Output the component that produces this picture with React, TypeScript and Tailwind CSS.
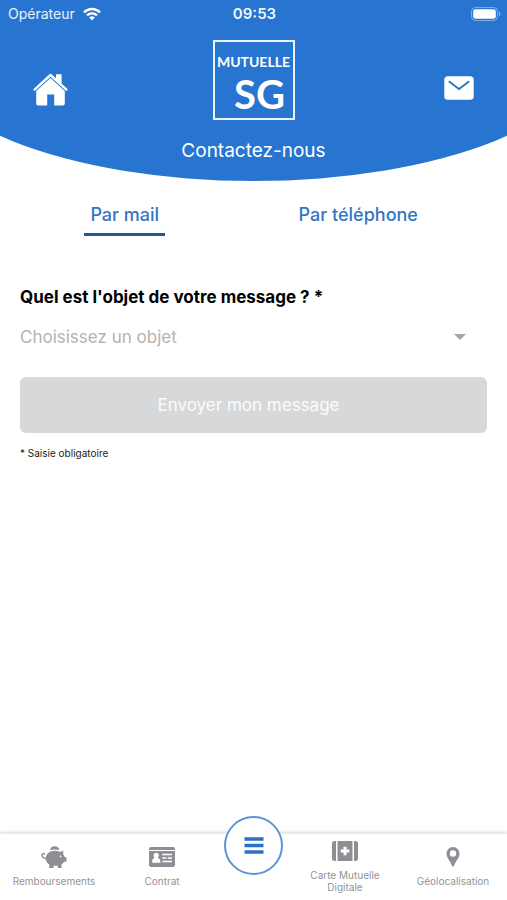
import type { ReactNode } from "react";

function WifiIcon() {
  return (
    <svg viewBox="0 0 18 14" className="h-3.5 w-[18px]" fill="none" stroke="white" strokeWidth="2.4" aria-hidden="true">
      <path d="M1 5.3a11.3 11.3 0 0 1 16 0" />
      <path d="M4 8.5a7 7 0 0 1 10 0" />
      <path d="M9 13.4 6.2 10.6a4 4 0 0 1 5.6 0Z" fill="white" stroke="none" />
    </svg>
  );
}

function BatteryIcon() {
  return (
    <svg viewBox="0 0 30 14" className="h-3.5 w-[30px]" aria-hidden="true">
      <rect x="0.5" y="0.5" width="26" height="13" rx="4" fill="none" stroke="white" strokeOpacity="0.4" />
      <rect x="2.2" y="2.2" width="22.6" height="9.6" rx="2.4" fill="white" />
      <path d="M28 4.8c1.8.6 1.8 3.8 0 4.4Z" fill="white" fillOpacity="0.5" />
    </svg>
  );
}

function HomeIcon() {
  return (
    <svg viewBox="0 0 35 33" className="h-[33px] w-[35px]" aria-hidden="true">
      <path d="M23 1.2h5.600v10.400l-5.600-5Z" fill="white" />
      <path d="M1.6 16.6 17.5 2l15.9 14.6" fill="none" stroke="white" strokeWidth="2.4" strokeLinecap="round" strokeLinejoin="round" />
      <path d="M17.5 5 31.800 18v12.6a2 2 0 0 1-2 2h-8.600V21.500h-7v11.1H5.2a2 2 0 0 1-2-2V18Z" fill="white" />
    </svg>
  );
}

function MailIcon() {
  return (
    <svg viewBox="0 0 30 24" className="h-6 w-[30px]" aria-hidden="true">
      <rect x="0.3" y="0.3" width="29.4" height="23.4" rx="3.5" fill="white" />
      <path d="m4.800 5.2 10.200 7.800 10.200-7.800" fill="none" stroke="#2775d1" strokeWidth="1.9" />
    </svg>
  );
}

function PigIcon() {
  return (
    <svg viewBox="0 0 26 24" className="h-6 w-[26px]" fill="#8e8f95" aria-hidden="true">
      <path d="M9 5.200a4.800 4.800 0 0 1 9.400-.2c-3-.7-6-.7-9.400.2Z" />
      <path d="M14 5.800c2 0 3.700.4 5.200 1.200l3-1.400v3.800c.9.900 1.400 1.800 1.700 2.800h1.600v4.600h-2.300c-.7 1.100-1.600 2-2.700 2.700v3.500h-3.700v-2.200h-4.300V23H8.300v-3.500c-2.100-1.300-3.500-3.300-3.500-6 0-4.400 3.800-7.700 9.200-7.700Z" />
      <path d="M5.400 13.800C2 13.400.7 11.600 1 9.800c.2-1.300 2-1.700 2.400-.6" fill="none" stroke="#8e8f95" strokeWidth="1.4" strokeLinecap="round" />
      <circle cx="19.600" cy="11.400" r="0.900" fill="white" />
    </svg>
  );
}

function ContractIcon() {
  return (
    <svg viewBox="0 0 26 20" className="h-5 w-[26px]" fill="#8e8f95" aria-hidden="true">
      <path d="M0 3V2Q0 0 2 0h22q2 0 2 2v1Z" />
      <path d="M0 4h26v14q0 2-2 2H2q-2 0-2-2Z" />
      <path d="M4.600 8.300a2.600 2.600 0 0 1 5.200 0c0 1.200-.5 2.100-1 2.700 1.600.5 2.500 1.300 2.500 2.900v1.800H3.200v-1.800c0-1.600.9-2.400 2.400-2.900-.5-.6-1-1.500-1-2.700Z" fill="white" />
      <path d="M13.300 7.500h9.700M13.300 11h4.200M18.800 11h4.200M13.300 14.500h9.700" stroke="white" strokeWidth="1.400" />
    </svg>
  );
}

function KitIcon() {
  return (
    <svg viewBox="0 0 26 20" className="h-5 w-[26px]" fill="#8e8f95" aria-hidden="true">
      <path d="M4 0v20H2.500Q0 20 0 17.500v-15Q0 0 2.500 0Z" />
      <path d="M5.500 0h15v20h-15Z" />
      <path d="M22 0h1.500Q26 0 26 2.500v15q0 2.500-2.500 2.500H22Z" />
      <path d="M11.500 5.700h3v2.800h2.800v3h-2.800v2.800h-3v-2.800H8.700v-3h2.800Z" fill="white" />
    </svg>
  );
}

function PinIcon() {
  return (
    <svg viewBox="0 0 14 20" className="h-5 w-3.5" aria-hidden="true">
      <path fillRule="evenodd" fill="#8e8f95" d="M7 0a6.500 6.500 0 0 1 6.500 6.700C13.500 11 9.300 14.500 7.900 19q-.9 1.300-1.800 0C4.700 14.500.5 11 .5 6.700A6.500 6.500 0 0 1 7 0Zm0 3.300a3.200 3.200 0 1 0 0 6.400 3.200 3.200 0 0 0 0-6.400Z" />
    </svg>
  );
}

function NavItem({ icon, children }: { icon: ReactNode; children: ReactNode }) {
  return (
    <a href="#" className="flex flex-1 flex-col items-center justify-center pb-0.5 text-center text-[10px] leading-3 text-[#939398]">
      <span className="mb-1.5 flex h-6 items-center">{icon}</span>
      {children}
    </a>
  );
}

export default function App() {
  return (
    <div className="flex min-h-screen flex-col bg-white font-['Inter','Liberation_Sans',sans-serif]">
      <header className="h-[181px] bg-[#2775d1] text-white [clip-path:ellipse(67%_135px_at_50%_46px)]">
        <div className="grid h-7 grid-cols-3 items-center pr-1.5 pl-2">
          <div className="flex items-center gap-2 text-sm text-white/90">
            Opérateur
            <WifiIcon />
          </div>
          <time className="text-center text-[15px] font-semibold text-white/95">09:53</time>
          <div className="flex justify-end">
            <BatteryIcon />
          </div>
        </div>
        <div className="mt-3 grid grid-cols-[1fr_auto_1fr] items-start px-[33px]">
          <button type="button" aria-label="Accueil" className="mt-[33px] justify-self-start">
            <HomeIcon />
          </button>
          <div className="flex h-20 w-[82px] flex-col items-center border-2 border-white/90 pt-3 font-['Lato','Open_Sans',sans-serif] font-bold">
            <span className="text-sm leading-4">MUTUELLE</span>
            <span className="ml-3 text-[40px] leading-12">SG</span>
          </div>
          <button type="button" aria-label="Messages" className="mt-9 justify-self-end">
            <MailIcon />
          </button>
        </div>
        <h1 className="mt-[17px] text-center text-[19px] leading-7">Contactez-nous</h1>
      </header>

      <main className="flex-1">
        <div role="tablist" className="mt-5 grid grid-cols-2 justify-items-center pr-8 pl-2 text-lg leading-7 font-medium text-[#3276c5]">
          <button type="button" role="tab" aria-selected="true" className="border-b-[3px] border-[#235b91] px-1.5 pb-1">
            Par mail
          </button>
          <button type="button" role="tab" aria-selected="false" className="border-b-[3px] border-transparent px-1.5 pb-1">
            Par téléphone
          </button>
        </div>

        <form className="mt-[47px] px-5">
          <label htmlFor="objet" className="block text-[17px] leading-7 font-bold text-black">
            Quel est l'objet de votre message ? *
          </label>
          <div className="relative mt-[11px]">
            <select id="objet" defaultValue="" className="block h-8 w-full appearance-none bg-transparent text-[17px] text-[#b3b3b3]">
              <option value="">Choisissez un objet</option>
            </select>
            <svg viewBox="0 0 12 6" className="pointer-events-none absolute top-3 right-[21px] h-1.5 w-3" fill="#a6a6a6" aria-hidden="true">
              <path d="M0 0h12L6 6Z" />
            </svg>
          </div>
          <button type="button" className="mt-[23px] block h-14 w-full rounded-md bg-[#d6d8da] pt-0.5 pr-2.5 text-[17px] text-white/90">
            Envoyer mon message
          </button>
          <p className="mt-3 text-[10px] leading-4 text-[#222222]">* Saisie obligatoire</p>
        </form>
      </main>

      <nav className="flex h-[67px] border-t border-[#ebebeb] bg-white shadow-[0_-1px_3px_rgba(0,0,0,0.15)]">
        <NavItem icon={<PigIcon />}>Remboursements</NavItem>
        <NavItem icon={<ContractIcon />}>Contrat</NavItem>
        <div className="flex w-[75px] justify-center">
          <button type="button" aria-label="Menu" className="-mt-[18px] flex size-[59px] items-center justify-center rounded-full border-2 border-[#5c94d8] bg-white">
            <svg viewBox="0 0 20 17" className="h-[17px] w-5" stroke="#2b70c4" strokeWidth="3.4" aria-hidden="true">
              <path d="M.5 2h19M.5 8.500h19M.5 15h19" />
            </svg>
          </button>
        </div>
        <NavItem icon={<KitIcon />}>
          Carte Mutuelle
          <br />
          Digitale
        </NavItem>
        <NavItem icon={<PinIcon />}>Géolocalisation</NavItem>
      </nav>
    </div>
  );
}
